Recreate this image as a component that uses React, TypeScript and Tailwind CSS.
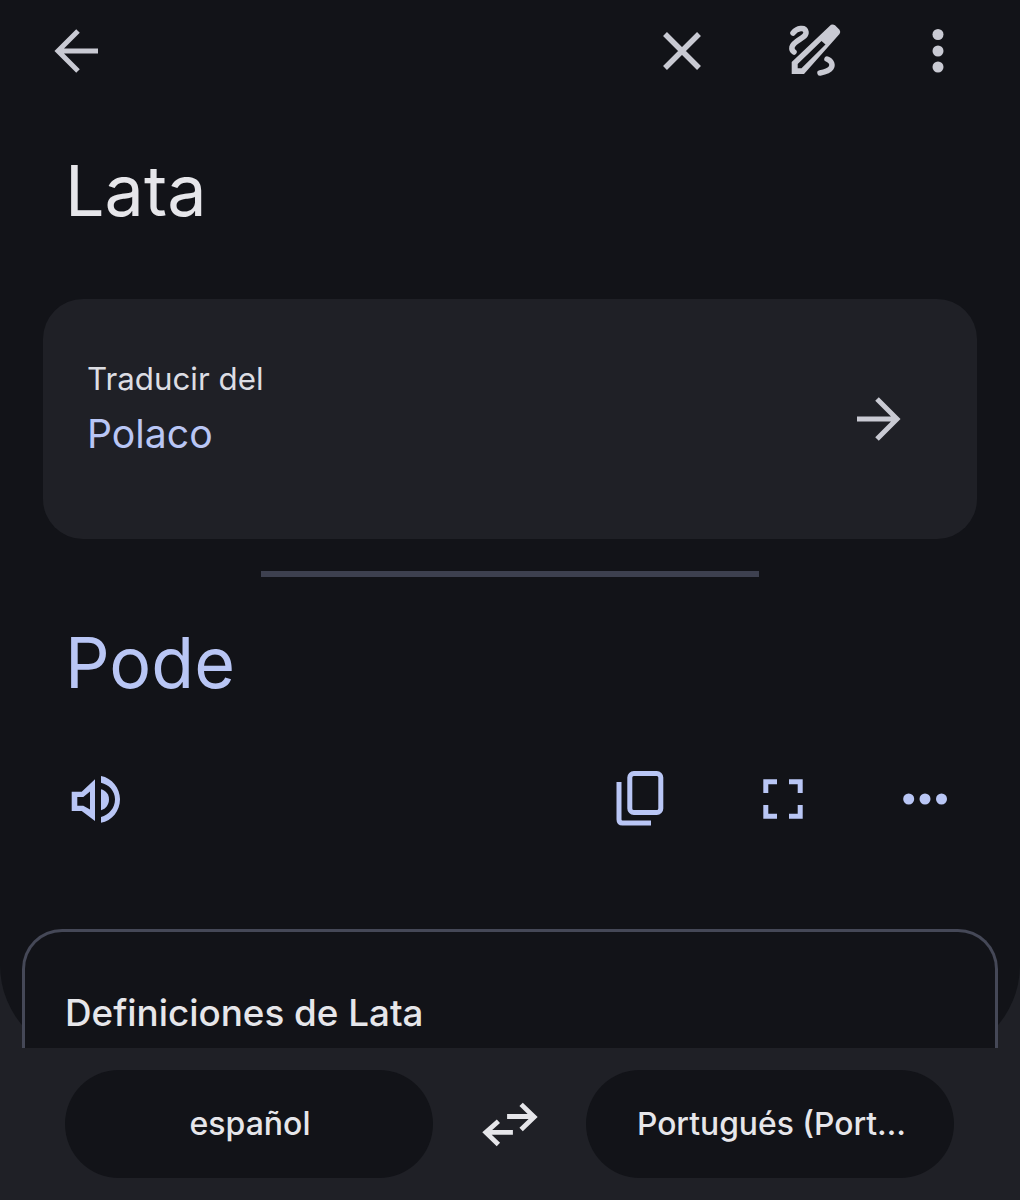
const grey = "#c9cad3";
const blue = "#b9c6f5";

function Back() {
  return (
    <svg width="60" height="60" viewBox="0 0 60 60" fill="none" stroke={grey} strokeWidth="5">
      <path d="M49 30H10M29 10L9 30L29 50" />
    </svg>
  );
}
function Close() {
  return (
    <svg width="60" height="60" viewBox="0 0 60 60" fill="none" stroke={grey} strokeWidth="5.5">
      <path d="M13 13L47 47M47 13L13 47" />
    </svg>
  );
}
function Pen() {
  return (
    <svg width="60" height="60" viewBox="0 0 60 60" fill="none">
      <path
        fillRule="evenodd"
        fill={grey}
        d="M6.7 53V41L46 3.8Q48 3 50 4.2L54.5 8.700Q56 11 54.5 13L19 53ZM12.7 47.3H16.500L40.500 23.500L36.500 20L12.7 43Z"
      />
      <path
        stroke={grey}
        strokeWidth="5.5"
        strokeLinecap="round"
        d="M8 12C12 7 20 5.5 21 11C22 17 9 19 7 26C6.5 28.5 7.5 30 9 31M42 38C47 40 48 44 46 47C44 50 40 51 35 52"
      />
    </svg>
  );
}
function VDots() {
  return (
    <svg width="60" height="60" viewBox="0 0 60 60" fill={grey}>
      <circle cx="30" cy="13.5" r="5.5" />
      <circle cx="30" cy="30" r="5.5" />
      <circle cx="30" cy="46" r="5.5" />
    </svg>
  );
}
function Forward() {
  return (
    <svg width="60" height="60" viewBox="0 0 60 60" fill="none" stroke={grey} strokeWidth="5">
      <path d="M9 30H48M29 10L49 30L29 50" />
    </svg>
  );
}
function Speaker() {
  return (
    <svg width="60" height="60" viewBox="0 0 60 60" fill={blue}>
      <path
        fillRule="evenodd"
        d="M5.7 22.7V42H15.7L29 52V10.3L15.7 22.7ZM11.3 28V36.7H17.3L24 40.500V22.500L17.3 28Z"
      />
      <path d="M35 7C46 9 54 19 54 30.3C54 42 46 52 35 53.7V48C43 46 49 39 49 30.3C49 22 43 15.5 35 13.7Z" />
      <path d="M35 20.3C40 21.5 43 25.5 43 30.3C43 35.5 40 39.8 35 41.3Z" />
    </svg>
  );
}
function Copy() {
  return (
    <svg width="60" height="60" viewBox="0 0 60 60" fill="none" stroke={blue} strokeWidth="5">
      <rect x="17.8" y="4.5" width="31" height="39" rx="4" />
      <path d="M7 13V50.500Q7 54 10.500 54H39" />
    </svg>
  );
}
function Scan() {
  return (
    <svg width="60" height="60" viewBox="0 0 60 60" fill="none" stroke={blue} strokeWidth="5">
      <path d="M12.800 24V12.800H24M36 12.800H47.200V24M12.800 36V47.200H24M36 47.200H47.200V36" />
    </svg>
  );
}
function HDots() {
  return (
    <svg width="60" height="60" viewBox="0 0 60 60" fill={blue}>
      <circle cx="13.700" cy="30" r="5.500" />
      <circle cx="30" cy="30" r="5.500" />
      <circle cx="46.500" cy="30" r="5.500" />
    </svg>
  );
}
function Swap() {
  return (
    <svg width="60" height="60" viewBox="0 0 60 60" fill="none" stroke="#e6e6ea" strokeWidth="5">
      <path d="M27 16H55M41.500 3.500L55 16.500L41.500 29.500M33 32.500H5M18 21L5 32.500L18 45" />
    </svg>
  );
}

export default function App() {
  return (
    <div className="w-[1020px] h-[1200px] bg-[#1f2026] overflow-hidden [font-family:'Inter',sans-serif]">
      <div className="h-[1058px] bg-[#121318] rounded-b-[93px] flex flex-col">
        <div className="h-[100px] flex items-center pt-[2px]">
          <div className="ml-[49px]"><Back /></div>
          <div className="ml-[543px]"><Close /></div>
          <div className="ml-[73px]"><Pen /></div>
          <div className="ml-[63px]"><VDots /></div>
        </div>
        <div className="ml-[65px] mt-[45px] text-[70px] leading-[92px] text-[#e6e6ea]">Lata</div>
        <div className="mx-[43px] mt-[62px] h-[240px] rounded-[40px] bg-[#1f2026] flex items-center justify-between pl-[44px] pr-[69px]">
          <div className="flex flex-col pb-[14px]">
            <span className="text-[31.3px] leading-[44px] text-[#dcdde3]">Traducir del</span>
            <span className="text-[39.2px] leading-[66px] text-[#b9c6f5]">Polaco</span>
          </div>
          <Forward />
        </div>
        <div className="mx-auto mt-[32px] w-[498px] h-[6px] bg-[#3d404f]" />
        <div className="ml-[65px] mt-[40px] text-[70px] leading-[92px] text-[#b9c6f5]">Pode</div>
        <div className="mt-[60px] h-[60px] flex items-center">
          <div className="ml-[66px]"><Speaker /></div>
          <div className="ml-[486px]"><Copy /></div>
          <div className="ml-[81px]"><Scan /></div>
          <div className="ml-[82px]"><HDots /></div>
        </div>
        <div className="mx-[22px] mt-[100px] flex-1 rounded-t-[40px] border-[3px] border-b-0 border-[#454857] bg-[#121318] pl-[40px] pt-[57px]">
          <span className="text-[36.8px] leading-[48px] font-medium text-[#e6e6ea]">Definiciones de Lata</span>
        </div>
      </div>
      <div className="relative -mt-[10px] h-[152px] bg-[#1f2026] flex items-start pt-[22px] pl-[65px]">
        <div className="w-[368px] h-[108px] pl-[2px] rounded-full bg-[#121318] flex items-center justify-center text-[32px] font-medium text-[#e6e6ea]">español</div>
        <div className="ml-[48px] mr-[47px] mt-[30px] w-[58px] flex justify-center"><Swap /></div>
        <div className="w-[368px] h-[108px] pl-[3px] rounded-full bg-[#121318] flex items-center justify-center text-[31.8px] font-medium text-[#e6e6ea]">Portugués (Port…</div>
      </div>
    </div>
  );
}
